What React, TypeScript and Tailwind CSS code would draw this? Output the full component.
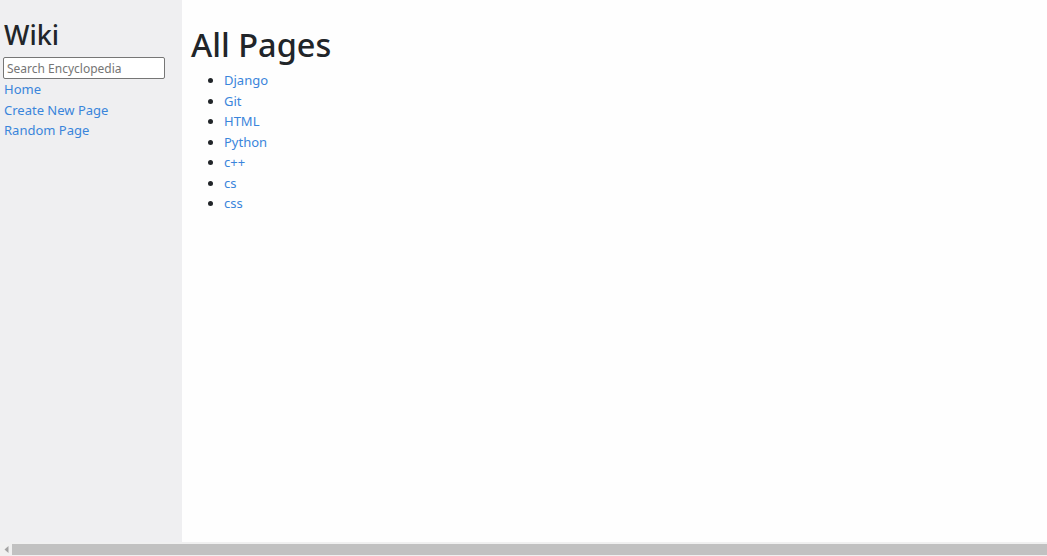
export default function App() {
  const pages = ["Django", "Git", "HTML", "Python", "c++", "cs", "css"];

  return (
    <div
      className="h-[556px] w-[1047px] flex flex-col overflow-hidden bg-[#fefefe] text-[#212529]"
      style={{ fontFamily: '"Segoe UI", "Noto Sans", sans-serif' }}
    >
      <div className="flex flex-1 min-h-0">
        {/* Sidebar */}
        <div className="w-[182px] shrink-0 bg-[#efeff1] pl-[3px] pr-[17px] pt-[18px]">
          <h2 className="text-[27px] leading-[33px] font-medium mb-[6px] pl-[1px]">Wiki</h2>
          <input
            type="text"
            placeholder="Search Encyclopedia"
            className="block w-[162px] h-[22px] border border-[#767676] rounded-[2px] bg-white px-[3px] text-[12px] placeholder:text-[#757575] outline-none"
          />
          <div className="text-[13px] leading-[20.5px] pl-[1px]">
            <div><a className="text-[#3a85db]">Home</a></div>
            <div><a className="text-[#3a85db]">Create New Page</a></div>
            <div><a className="text-[#3a85db]">Random Page</a></div>
          </div>
        </div>

        {/* Main content */}
        <div className="flex-1 pl-[9px] pt-[25px]">
          <h1 className="text-[32.5px] leading-[40px] font-medium mb-[5px]">All Pages</h1>
          <ul className="list-disc pl-[33px] text-[13px] leading-[20.5px]">
            {pages.map((p) => (
              <li key={p}>
                <a className="text-[#3a85db]">{p}</a>
              </li>
            ))}
          </ul>
        </div>
      </div>

      {/* Horizontal scrollbar */}
      <div className="h-[14px] shrink-0 bg-[#f0f0f0] flex items-center">
        <div className="w-[12px] flex justify-center">
          <svg width="5" height="7" viewBox="0 0 5 7">
            <path d="M4.5 0 L0.5 3.5 L4.5 7 Z" fill="#a3a3a3" />
          </svg>
        </div>
        <div className="flex-1 h-[11px] bg-[#c1c1c1]" />
      </div>
    </div>
  );
}
